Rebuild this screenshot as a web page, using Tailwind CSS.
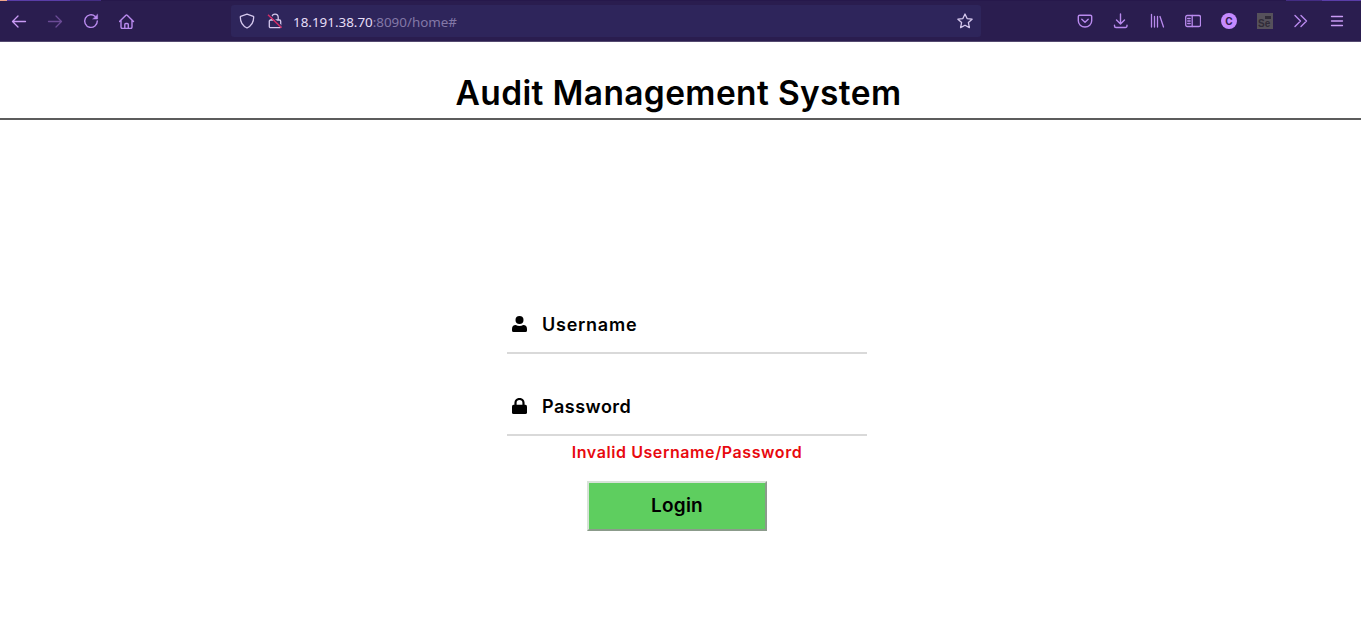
<!DOCTYPE html>
<html lang="en">
<head>
<meta charset="utf-8">
<title>Audit Management System</title>
<script src="https://cdn.jsdelivr.net/npm/@tailwindcss/browser@4"></script>
</head>
<body class="h-[627px] overflow-hidden bg-white font-['Inter',sans-serif] text-black">
<header class="h-[42px] border-b border-[#544a70] bg-[#2a1d4f] text-[#b98aee]">
  <div class="flex h-px"><div class="w-[7px] bg-[#f0a58a]"></div><div class="w-[63px] bg-[#5a3da8]"></div><div class="w-[31px] bg-[#432c83]"></div><div class="grow bg-[#26184b]"></div><div class="w-[36px] bg-[#432c83]"></div><div class="w-[39px] bg-[#5a3da8]"></div></div>
  <nav class="flex h-10 items-center">
    <div class="flex w-[231px] gap-5 pl-[11px]">
      <svg class="size-4" viewBox="0 0 16 16" fill="none" stroke="#c99bf5" stroke-width="1.3" stroke-linecap="round" stroke-linejoin="round"><path d="M14.5 8.5H1.5M7 3L1.5 8.5 7 14"/></svg>
      <svg class="size-4" viewBox="0 0 16 16" fill="none" stroke="#6b4b96" stroke-width="1.3" stroke-linecap="round" stroke-linejoin="round"><path d="M1.5 8.5H14.5M9 3l5.5 5.5L9 14"/></svg>
      <svg class="size-4" viewBox="0 0 16 16" fill="none" stroke="currentColor" stroke-width="1.4" stroke-linecap="round"><path d="M12.2 3.4A6.3 6.3 0 1 0 14.3 8"/><path d="M14.6 1.5V6H10z" fill="currentColor" stroke-width=".5"/></svg>
      <svg class="size-4" viewBox="0.5 -0.5 16 16" fill="none" stroke="currentColor" stroke-width="1.4" stroke-linecap="round" stroke-linejoin="round"><path d="M1 8l6.4-6.3a1 1 0 0 1 1.3 0L15 8M2.5 7v6.5a1.5 1.5 0 0 0 1.5 1.5h8a1.5 1.5 0 0 0 1.5-1.5V7M6.3 15v-4a1 1 0 0 1 1-1h1.5a1 1 0 0 1 1 1v4"/></svg>
    </div>
    <div class="flex h-8 w-[750px] items-center rounded-[3px] bg-[#2e255b] pl-2 pr-2">
      <svg class="size-4" viewBox="0 0 16 16" fill="none" stroke="#d5c8ed" stroke-width="1.3" stroke-linejoin="round"><path d="M8 1.2L14.3 3.3a1 1 0 0 1 .4.8C14.7 9.5 12 13.2 8 15 4 13.2 1.3 9.5 1.3 4.1a1 1 0 0 1 .4-.8z"/></svg>
      <svg class="ml-3 size-4" viewBox="0 0 16 16" fill="none" stroke="#d5c8ed" stroke-width="1.3"><path d="M4.8 7V4.3a3.2 3.2 0 0 1 6.4 0V7M3.5 7h9a1.2 1.2 0 0 1 1.2 1.2v5.3a1.2 1.2 0 0 1-1.2 1.2h-9a1.2 1.2 0 0 1-1.2-1.2V8.2A1.2 1.2 0 0 1 3.5 7z"/><path d="M2.2 1.2l12.5 12" stroke="#2e255b" stroke-width="1.2"/><path d="M1 1.8L14.5 14.8" stroke="#d52d68" stroke-width="1.5"/></svg>
      <span class="ml-[10px] grow pt-0.5 font-['Noto_Sans',sans-serif] text-[13.4px] text-[#e6def6]">18.191.38.70<span class="text-[#8378a7]">:8090/home#</span></span>
      <svg class="size-4" viewBox="0 0 16 16" fill="none" stroke="#d5c8ed" stroke-width="1.3" stroke-linejoin="round"><path d="M8 1l2.1 4.6 5 .6-3.7 3.4 1 5L8 12.2l-4.4 2.4 1-5L.9 6.2l5-.6z"/></svg>
    </div>
    <div class="ml-24 flex gap-5">
      <svg class="size-4" viewBox="0 0 16 16" fill="none" stroke="currentColor" stroke-width="1.4" stroke-linecap="round" stroke-linejoin="round"><path d="M2.7 2.2h10.6a1.4 1.4 0 0 1 1.4 1.4v4.1a6.7 6.3 0 0 1-13.4 0V3.6a1.4 1.4 0 0 1 1.4-1.4zM4.8 6.2L8 9.2l3.2-3"/></svg>
      <svg class="size-4" viewBox="0 0 16 16" fill="none" stroke="currentColor" stroke-width="1.4" stroke-linecap="round" stroke-linejoin="round"><path d="M7.5 1v10M3.5 7l4 4 4-4M1.5 12.3v.7a1.5 1.5 0 0 0 1.5 1.5h9.5A1.5 1.5 0 0 0 14 13v-.7"/></svg>
      <svg class="size-4" viewBox="0 0 16 16" fill="none" stroke="currentColor" stroke-width="1.3" stroke-linecap="round"><path d="M2.5 1.500v12.500M5.500 3.500v10.500M8.500 3.500v10.500M11 3.500l3.500 10.500"/></svg>
      <svg class="size-4" viewBox="0 0 16 16" fill="none" stroke="currentColor" stroke-width="1.3" stroke-linecap="round"><rect x=".7" y="2.5" width="14.8" height="11" rx="1.5"/><path d="M7.2 2.5v11M2.7 5.5h2.500M2.700 8h2.500M2.700 10.500h2.500"/></svg>
      <span class="flex size-4 items-center justify-center rounded-full bg-[#c58aff] text-[10px] font-bold text-[#30204f]">C</span>
      <span class="relative size-4 bg-[#56515b]"><span class="absolute bottom-px left-[1px] font-['Liberation_Sans'] text-[10px] font-bold leading-[9px] text-[#302b38]">Se</span><span class="absolute right-[2px] top-[3px] h-[3px] w-1.5 bg-[#302b38]"></span></span>
      <svg class="size-4" viewBox="0 0 16 16" fill="none" stroke="currentColor" stroke-width="1.4" stroke-linecap="round" stroke-linejoin="round"><path d="M2 2.5L7.5 8 2 13.5M8 2.5L13.5 8 8 13.5"/></svg>
      <svg class="size-4" viewBox="0 0 16 16" fill="none" stroke="#c99bf5" stroke-width="1.3" stroke-linecap="round"><path d="M2.5 3.5h11M2.5 8h11M2.5 12.5h11"/></svg>
    </div>
  </nav>
</header>
<h1 class="flex h-[78px] items-end justify-center border-b-2 border-[#5c5c5c] pb-[5px] pr-1 text-[33.5px] font-semibold leading-[40px] tracking-[0.36px]"><span>Audit Management System</span></h1>
<main class="ml-[507px] w-[360px] pt-[175px]">
  <label class="flex h-[59px] items-center border-b-2 border-[#d9d9d9] pl-[5px] text-[18px] font-semibold">
    <svg class="mr-[15px] h-4 w-[15px]" viewBox="0 0 15 16"><circle cx="7.5" cy="4" r="4"/><path d="M3.8 9c2 1.300 5.400 1.300 7.400 0A4 4 0 0 1 15 13v1.500a1.500 1.500 0 0 1-1.500 1.500h-12A1.500 1.500 0 0 1 0 14.500V13a4 4 0 0 1 3.800-4z"/></svg>
    <span class="pt-0.5 tracking-[0.75px]">Username</span>
  </label>
  <label class="mt-[23px] flex h-[59px] items-center border-b-2 border-[#d9d9d9] pl-[5px] text-[18px] font-semibold">
    <svg class="mr-[15px] h-4 w-[15px]" viewBox="0 0 15 16"><rect y="6.8" width="15" height="9.2" rx="1.6"/><path d="M3.500 8V4.800a4 3.800 0 0 1 8 0V8" fill="none" stroke="#000" stroke-width="2.2"/></svg>
    <span class="pt-0.5 tracking-[0.5px]">Password</span>
  </label>
  <p class="mt-1 text-center text-base font-semibold leading-6 tracking-[0.58px] text-[#e8090f]"><span>Invalid Username/Password</span></p>
  <button class="ml-20 mt-[17px] block h-[50px] w-[180px] border-2 border-b-[#8b9b8b] border-l-[#d7e3d7] border-r-[#8b9b8b] border-t-[#d7e3d7] bg-[#5ece5f] pt-px text-[19px] font-semibold tracking-[0.2px]"><span>Login</span></button>
</main>
</body>
</html>
